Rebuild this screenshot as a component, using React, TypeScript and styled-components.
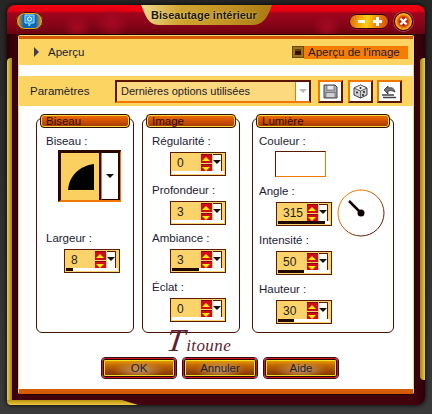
import styled, { createGlobalStyle } from 'styled-components';

const GlobalStyle = createGlobalStyle`
  html, body {
    margin: 0;
    padding: 0;
    width: 432px;
    height: 414px;
    overflow: hidden;
  }
  * {
    box-sizing: border-box;
  }
`;

const Page = styled.div`
  width: 432px;
  height: 414px;
  padding: 5px 7px 9px;
  background: linear-gradient(#262626, #3a3a3a);
  font-family: "Liberation Sans", Arial, sans-serif;
  font-size: 11px;
  color: #1c1c34;
`;

const Window = styled.div`
  position: relative;
  width: 418px;
  height: 400px;
  padding: 0 10px;
  border-radius: 8px 8px 8px 4px;
  background: linear-gradient(90deg, #2c0006, #42030e 12px, #42030e 406px, #2c0006);
  box-shadow: 0 0 5px #000;
  overflow: hidden;
`;

const GoldLeft = styled.div`
  position: absolute;
  left: 0;
  top: 53px;
  bottom: 0;
  width: 5px;
  background: linear-gradient(90deg, #e8cc50, #a88408);
  border-radius: 4px 0 0 5px;
`;

const GoldBottom = styled.div`
  position: absolute;
  left: 0;
  bottom: 0;
  width: 131px;
  height: 5px;
  background: linear-gradient(#b89010, #ecc840);
  clip-path: polygon(0 0, 115px 0, 131px 100%, 0 100%);
`;

const GoldRight = styled.div`
  position: absolute;
  right: 0;
  top: 53px;
  height: 322px;
  width: 5px;
  background: linear-gradient(90deg, #a88408, #e8cc50);
  border-radius: 4px 0 0 4px;
`;

const TitleBar = styled.div`
  display: flex;
  align-items: flex-start;
  height: 29px;
  margin: 0 -10px;
  padding-left: 9px;
  padding-right: 12px;
  background:
    radial-gradient(circle 14px at 70px 22px, #a40a22, transparent),
    radial-gradient(circle 16px at 105px 18px, #a40a22, transparent),
    radial-gradient(circle 14px at 320px 22px, #a40a22, transparent),
    linear-gradient(#f00012, #e80010 6px, #a0041c 8px, #860418 20px, #6c020f);
`;

const LogoButton = styled.div`
  display: flex;
  justify-content: center;
  align-items: center;
  width: 27px;
  height: 18px;
  margin-top: 7px;
  border: 2px solid #f4a818;
  border-radius: 9px;
  outline: 1px solid #400008;
  outline-offset: -1px;
  background: linear-gradient(90deg, #e89010, #0868b8 24%, #0868b8 76%, #e89010);
`;

const TitleTab = styled.div`
  display: flex;
  justify-content: center;
  align-items: center;
  width: 131px;
  height: 20px;
  margin-left: 98px;
  padding-right: 5px;
  background: linear-gradient(100deg, #f0dc90, #d0a430 30%, #c09020 70%, #a87a10);
  clip-path: path('M0 0 L131 0 C128 8 124 20 112 20 L18 20 C6 20 4 8 0 0 Z');
  font-size: 11px;
  font-weight: bold;
  color: #201408;
  text-shadow: 0 0 2px #f4e4a8;
`;

const Controls = styled.div`
  display: flex;
  align-items: flex-start;
  gap: 5px;
  margin-left: auto;
`;

const SizePill = styled.div`
  display: flex;
  justify-content: space-between;
  align-items: center;
  width: 40px;
  height: 15px;
  margin-top: 9px;
  padding: 0 6px 0 8px;
  border: 1px solid #300006;
  border-radius: 8px;
  box-shadow: 0 0 0 1px #9a1020;
  background: linear-gradient(100deg, #e06808, #ffd010 45%, #f09010 65%, #d84808);
`;

const CloseButton = styled.div`
  display: flex;
  justify-content: center;
  align-items: center;
  width: 19px;
  height: 19px;
  margin-top: 7px;
  border: 1px solid #400008;
  border-radius: 50%;
  background: radial-gradient(circle at 50% 50%, #c01808 30%, #f8b010 62%, #e86808);
  box-shadow: 0 0 0 1px #a84050;
`;

const Panel = styled.div`
  height: 361px;
  padding: 1px 1px 0;
  border: 1px solid #1a0400;
  border-radius: 3px;
  background: #f8d27a;
`;

const PanelInner = styled.div`
  height: 100%;
  border-top: 3px solid #d55c04;
  border-bottom: 5px solid #d55c04;
  background: #fff;
`;

const PreviewRow = styled.div`
  display: flex;
  align-items: center;
  height: 26px;
  padding: 0 5px 0 15px;
  background: #fcd462;
  font-size: 11.5px;
`;

const Arrow = styled.span`
  width: 0;
  height: 0;
  margin-right: 9px;
  border-left: 5px solid #40404c;
  border-top: 5px solid transparent;
  border-bottom: 5px solid transparent;
`;

const PreviewToggle = styled.div`
  display: flex;
  align-items: center;
  margin-left: auto;
  height: 13px;
`;

const CheckBox = styled.span`
  display: flex;
  justify-content: center;
  align-items: center;
  width: 12px;
  height: 12px;
  border: 1px solid #6a4a00;
  background: #a07018;
`;

const CheckMark = styled.span`
  width: 6px;
  height: 6px;
  background: #301000;
  border-top: 2px solid #604010;
`;

const ToggleLabel = styled.span`
  display: block;
  width: 104px;
  height: 13px;
  padding-left: 4px;
  background: #f87c00;
  line-height: 13px;
`;

const ParamRow = styled.div`
  display: flex;
  align-items: center;
  height: 30px;
  margin-top: 11px;
  padding-left: 11px;
  background: #fcd462;
`;

const ParamLabel = styled.span`
  width: 85px;
  font-size: 11.5px;
`;

const Combo = styled.div`
  display: flex;
  align-items: stretch;
  width: 196px;
  height: 23px;
  margin-right: 7px;
  padding-left: 4px;
  border: 2px solid #5a1500;
  border-bottom-color: #f07800;
  background: #fcd87e;
  line-height: 17px;
`;

const ComboText = styled.span`
  flex: 1;
  padding-top: 1px;
  color: #241c30;
`;

const ComboDrop = styled.span`
  display: flex;
  justify-content: center;
  align-items: center;
  width: 14px;
  border-left: 1px solid #f07800;
  background: #fff;
`;

const DownArrow = styled.span<{ $color: string }>`
  width: 0;
  height: 0;
  border-top: 4px solid ${p => p.$color};
  border-left: 4px solid transparent;
  border-right: 4px solid transparent;
`;

const IconButton = styled.div`
  display: flex;
  justify-content: center;
  align-items: center;
  width: 25px;
  height: 23px;
  margin-right: 4.5px;
  border: 2px solid #5a1500;
  border-top-color: #f07800;
  border-left-color: #f07800;
  background: #fff;
`;

const Groups = styled.div`
  display: flex;
  margin-top: 12px;
  padding-left: 17px;
  gap: 8px;
`;

const Group = styled.div<{ $width: number; $pad: number; $gap?: number; $indent: number }>`
  display: flex;
  flex-direction: column;
  width: ${p => p.$width}px;
  height: 215px;
  margin-left: ${p => p.$gap ?? 0}px;
  padding: 0 3px;
  border: 1px solid #4a1000;
  border-radius: 6px;
  background: #fff;
  --label-pad: ${p => p.$pad}px;
  --spin-indent: ${p => p.$indent}px;
`;

const GroupTitle = styled.div`
  height: 14px;
  margin-top: -5px;
  padding-left: 5px;
  border: 1px solid #301000;
  border-radius: 4px;
  box-shadow: inset 0 0 0 1px #f8d840;
  background: linear-gradient(#f07000, #d05000 50%, #a03800);
  color: #2c0c00;
  font-size: 11.5px;
  line-height: 12px;
`;

const Fields = styled.div`
  display: flex;
  flex-direction: column;
  gap: 8.67px;
  padding-top: 8px;
  padding-left: var(--label-pad);
`;

const Field = styled.div<{ $tall?: boolean }>`
  display: flex;
  flex-direction: column;
  min-height: ${p => (p.$tall ? '88.67px' : '40px')};
`;

const FieldRow = styled.div`
  display: flex;
  align-items: flex-start;
`;

const FieldLabel = styled.label`
  display: block;
  height: 16px;
  font-size: 11.5px;
  line-height: 11px;
`;

const SpinBox = styled.div`
  position: relative;
  display: flex;
  width: 56px;
  height: 24px;
  margin-left: var(--spin-indent);
  padding: 1px 3px 0 1px;
  border: 1px solid #5a1a00;
  background: #fcd36a;
`;

const SpinValue = styled.span`
  flex: 0 0 29px;
  padding: 3px 0 0 5px;
  font-size: 12px;
  line-height: 13px;
  color: #1c2418;
`;

const SpinArrows = styled.div`
  display: flex;
  flex-direction: column;
  gap: 1px;
  width: 12px;
`;

const SpinArrow = styled.span<{ $down?: boolean }>`
  display: flex;
  justify-content: center;
  align-items: center;
  height: 9px;
  background: #d00c1c;
  border-top: 1px solid #900010;

  &::after {
    content: '';
    width: 0;
    height: 0;
    border-left: 4px solid transparent;
    border-right: 4px solid transparent;
    ${p => (p.$down ? 'border-top: 4px solid #f8f000;' : 'border-bottom: 4px solid #f8f000;')}
  }
`;

const SpinDrop = styled.span`
  display: flex;
  justify-content: center;
  padding-top: 5px;
  width: 10px;
  height: 17px;
  margin-left: 1px;
  border-top: 1px solid #5a1a00;
  border-right: 1px solid #5a1a00;
  background: #fff;
`;

const SpinTrack = styled.div`
  position: absolute;
  left: 1px;
  right: 1px;
  bottom: 1px;
  height: 3px;
  background: #fff;
`;

const SpinFill = styled.div`
  height: 100%;
  background: #1e0800;
`;

const BevelPicker = styled.div`
  display: flex;
  width: 63px;
  height: 52px;
  margin: -2px 0 0 12px;
  border: 3px solid #2a0800;
  border-right: 1px solid #f07800;
  border-bottom: 2px solid #f07800;
`;

const BevelPreview = styled.div`
  display: flex;
  justify-content: center;
  align-items: center;
  width: 40px;
  background: #fbd060;
  border-right: 2px solid #2a0800;
`;

const BevelDrop = styled.div`
  display: flex;
  flex: 1;
  justify-content: center;
  align-items: center;
  border-left: 1px solid #f07800;
  border-right: 2px solid #2a0800;
  border-bottom: 1px solid #2a0800;
  background: #fff;
`;

const Swatch = styled.div`
  width: 51px;
  height: 26px;
  margin: -1px 0 0 16px;
  border: 1px solid #5a1a00;
  border-right-color: #f07800;
  border-bottom-color: #f07800;
  background: #fff;
`;

const Dial = styled.svg`
  display: block;
  margin: 3px -10px -10px 5px;
`;

const Signature = styled.div`
  position: absolute;
  left: 160px;
  top: 320px;
  font-family: "Liberation Serif", serif;
  font-style: italic;
  font-size: 17px;
  line-height: 30px;
  color: #5c1e30;
  letter-spacing: 0.4px;
`;

const BigT = styled.span`
  display: inline-block;
  margin-right: 1px;
  font-size: 32px;
  font-weight: normal;
  transform: skewX(-8deg);
`;

const Footer = styled.div`
  display: flex;
  gap: 7px;
  margin-top: 25px;
  padding-left: 83px;
`;

const ActionButton = styled.button`
  width: 74px;
  height: 20px;
  padding: 0;
  border: 1px solid #d81020;
  outline: 1px solid #301018;
  border-radius: 3px;
  box-shadow: inset 0 0 0 1px #200808, inset 0 0 0 2px #f0e020;
  background:
    radial-gradient(ellipse 26px 9px at 50% 60%, #c89860, transparent),
    linear-gradient(#f8b000, #c06800 35%, #7a2a00);
  font-family: "Liberation Sans", Arial, sans-serif;
  font-size: 11.5px;
  color: #1c2038;
`;

function Spin({ value, fill }: { value: number; fill?: number }) {
  return (
    <SpinBox>
      <SpinValue>{value}</SpinValue>
      <SpinArrows>
        <SpinArrow />
        <SpinArrow $down />
      </SpinArrows>
      <SpinDrop>
        <DownArrow $color="#111" />
      </SpinDrop>
      <SpinTrack>
        {fill ? <SpinFill style={{ width: fill }} /> : null}
      </SpinTrack>
    </SpinBox>
  );
}

function App() {
  return (
    <Page>
      <GlobalStyle />
      <Window>
        <TitleBar>
          <LogoButton>
            <svg width="13" height="14" viewBox="0 0 13 14">
              <path d="M2 1h9v8H8l-2 3V9H2z" fill="#2a9ae8" stroke="#a8e0ff" />
              <circle cx="6.5" cy="5" r="2" fill="none" stroke="#fff" />
            </svg>
          </LogoButton>
          <TitleTab>Biseautage intérieur</TitleTab>
          <Controls>
            <SizePill>
              <svg width="7" height="7" viewBox="0 0 7 7">
                <rect y="2" width="7" height="3" fill="#fff" />
              </svg>
              <svg width="9" height="9" viewBox="0 0 9 9">
                <path d="M3 0h3v3h3v3H6v3H3V6H0V3h3z" fill="#fff" />
              </svg>
            </SizePill>
            <CloseButton>
              <svg width="9" height="9" viewBox="0 0 9 9">
                <path d="M1.5 1.5l6 6M7.5 1.5l-6 6" stroke="#fff" strokeWidth="2.4" />
              </svg>
            </CloseButton>
          </Controls>
        </TitleBar>
        <Panel>
          <PanelInner>
            <PreviewRow>
              <Arrow />
              <span>Aperçu</span>
              <PreviewToggle>
                <CheckBox>
                  <CheckMark />
                </CheckBox>
                <ToggleLabel>Aperçu de l'image</ToggleLabel>
              </PreviewToggle>
            </PreviewRow>
            <ParamRow>
              <ParamLabel>Paramètres</ParamLabel>
              <Combo>
                <ComboText>Dernières options utilisées</ComboText>
                <ComboDrop>
                  <DownArrow $color="#b8b8b8" />
                </ComboDrop>
              </Combo>
              <IconButton>
                <svg width="15" height="15" viewBox="0 0 15 15">
                  <path d="M1 1h11l2 2v11H1z" fill="#a8a8b0" stroke="#404048" />
                  <rect x="4" y="1.5" width="7" height="4.5" fill="#e8e8ec" stroke="#505058" strokeWidth=".6" />
                  <rect x="3" y="8.5" width="9" height="5" fill="#d0d0d4" stroke="#505058" strokeWidth=".6" />
                </svg>
              </IconButton>
              <IconButton>
                <svg width="15" height="15" viewBox="0 0 15 15">
                  <path d="M7.5 1L14 4v7l-6.5 3L1 11V4z" fill="#d0d0d0" stroke="#404048" />
                  <path d="M1 4l6.5 3L14 4M7.5 7v7" fill="none" stroke="#404048" strokeWidth=".7" />
                  <path d="M7.5 1L14 4l-6.5 3L1 4z" fill="#f0f0f0" stroke="#404048" strokeWidth=".7" />
                  <circle cx="7.5" cy="4" r="1" fill="#222" />
                  <circle cx="4" cy="8.5" r="1" fill="#222" />
                  <circle cx="11" cy="8" r="1" fill="#222" />
                  <circle cx="10" cy="11" r="1" fill="#222" />
                </svg>
              </IconButton>
              <IconButton>
                <svg width="17" height="15" viewBox="0 0 17 15">
                  <path d="M3 6l4-4v2c4-1 6 0 7 4-2-1-4-2-7-1v3z" fill="#707078" stroke="#303038" strokeWidth=".8" />
                  <path d="M1 11h12M2 13.5h13" stroke="#404048" strokeWidth="1.4" />
                </svg>
              </IconButton>
            </ParamRow>
            <Groups>
              <Group $width={98} $pad={6} $indent={18}>
                <GroupTitle>Biseau</GroupTitle>
                <Fields>
                  <Field $tall>
                    <FieldLabel>Biseau :</FieldLabel>
                    <BevelPicker>
                      <BevelPreview>
                        <svg width="27" height="26" viewBox="0 0 27 26">
                          <path d="M1 26C2 12 12 2 27 0v26z" fill="#000" />
                        </svg>
                      </BevelPreview>
                      <BevelDrop>
                        <DownArrow $color="#111" />
                      </BevelDrop>
                    </BevelPicker>
                  </Field>
                  <Field>
                    <FieldLabel>Largeur :</FieldLabel>
                    <Spin value={8} fill={7} />
                  </Field>
                </Fields>
              </Group>
              <Group $width={98} $pad={6} $indent={18}>
                <GroupTitle>Image</GroupTitle>
                <Fields>
                  <Field>
                    <FieldLabel>Régularité :</FieldLabel>
                    <Spin value={0} />
                  </Field>
                  <Field>
                    <FieldLabel>Profondeur :</FieldLabel>
                    <Spin value={3} />
                  </Field>
                  <Field>
                    <FieldLabel>Ambiance :</FieldLabel>
                    <Spin value={3} fill={27} />
                  </Field>
                  <Field>
                    <FieldLabel>Éclat :</FieldLabel>
                    <Spin value={0} />
                  </Field>
                </Fields>
              </Group>
              <Group $width={142} $pad={3} $gap={4} $indent={17}>
                <GroupTitle>Lumière</GroupTitle>
                <Fields>
                  <Field>
                    <FieldLabel>Couleur :</FieldLabel>
                    <Swatch />
                  </Field>
                  <FieldRow>
                    <Field>
                      <FieldLabel>Angle :</FieldLabel>
                      <Spin value={315} fill={47} />
                    </Field>
                    <Dial width="48" height="48" viewBox="0 0 48 48">
                      <defs>
                        <linearGradient id="dialRing" x1="0" y1="0" x2="1" y2="1">
                          <stop offset="0.3" stopColor="#f07800" />
                          <stop offset="0.8" stopColor="#5a1a00" />
                        </linearGradient>
                      </defs>
                      <circle cx="24" cy="24" r="23" fill="#fff" stroke="url(#dialRing)" />
                      <path d="M12 12L24 24" stroke="#100000" strokeWidth="2.5" />
                      <circle cx="24" cy="24" r="3.5" fill="#100000" />
                    </Dial>
                  </FieldRow>
                  <Field>
                    <FieldLabel>Intensité :</FieldLabel>
                    <Spin value={50} fill={26} />
                  </Field>
                  <Field>
                    <FieldLabel>Hauteur :</FieldLabel>
                    <Spin value={30} fill={16} />
                  </Field>
                </Fields>
              </Group>
            </Groups>
            <Footer>
              <ActionButton>OK</ActionButton>
              <ActionButton>Annuler</ActionButton>
              <ActionButton>Aide</ActionButton>
            </Footer>
          </PanelInner>
        </Panel>
        <Signature>
          <BigT>T</BigT>itoune
        </Signature>
        <GoldLeft />
        <GoldBottom />
        <GoldRight />
      </Window>
    </Page>
  );
}

export default App;
